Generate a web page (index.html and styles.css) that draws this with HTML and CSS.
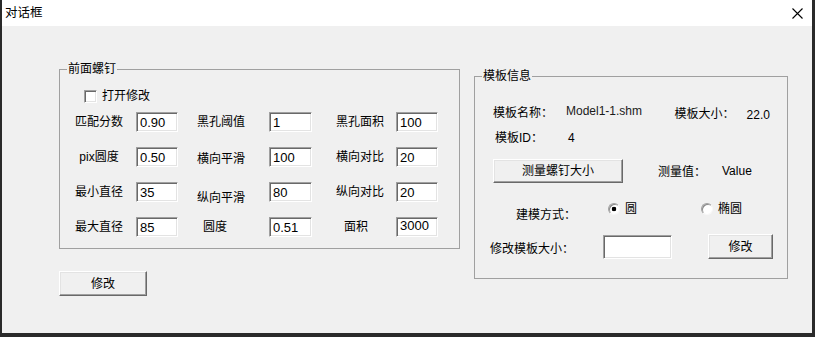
FILE: index.html
```html
<!DOCTYPE html>
<html lang="zh-CN">
<head>
<meta charset="utf-8">
<title>对话框</title>
<link rel="stylesheet" href="styles.css">
</head>
<body>
<div class="window">
  <div class="titlebar">
    <span class="title">对话框</span>
    <svg class="close" width="11" height="11" viewBox="0 0 11 11"><path d="M0.5 0.5 L10.5 10.5 M10.5 0.5 L0.5 10.5" stroke="#000" stroke-width="1.1" fill="none"/></svg>
  </div>
  <div class="client">
    <div class="left-col">
      <div class="groupbox gb-left">
        <span class="gb-title">前面螺钉</span>
        <div class="check-row"><span class="checkbox"></span><span>打开修改</span></div>
        <div class="param-grid">
          <span class="lbl1">匹配分数</span><input class="edit" value="0.90" readonly>
          <span class="lbl2">黑孔阈值</span><input class="edit" value="1" readonly>
          <span class="lbl3">黑孔面积</span><input class="edit" value="100" readonly>

          <span class="lbl1">pix圆度</span><input class="edit" value="0.50" readonly>
          <span class="lbl2 drop-s">横向平滑</span><input class="edit" value="100" readonly>
          <span class="lbl3">横向对比</span><input class="edit" value="20" readonly>

          <span class="lbl1">最小直径</span><input class="edit" value="35" readonly>
          <span class="lbl2 drop">纵向平滑</span><input class="edit" value="80" readonly>
          <span class="lbl3">纵向对比</span><input class="edit" value="20" readonly>

          <span class="lbl1">最大直径</span><input class="edit" value="85" readonly>
          <span class="lbl2 ind">圆度</span><input class="edit" value="0.51" readonly>
          <span class="lbl3 ind">面积</span><input class="edit up" value="3000" readonly>
        </div>
      </div>
      <button class="btn btn-left">修改</button>
    </div>

    <div class="groupbox gb-right">
      <span class="gb-title">模板信息</span>
      <div class="row r1">
        <span class="w-name">模板名称：</span>
        <span class="w-model">Model1-1.shm</span>
        <span class="w-size">模板大小：</span>
        <span class="w-cover">22.0</span>
      </div>
      <div class="row r2">
        <span class="w-id">模板ID：</span>
        <span>4</span>
      </div>
      <div class="row r3">
        <button class="btn btn-measure">测量螺钉大小</button>
        <span class="w-mlabel">测量值：</span>
        <span>Value</span>
      </div>
      <div class="row r4">
        <span class="w-mode">建模方式：</span>
        <span class="radio checked"></span><span class="radio-text">圆</span>
        <span class="radio radio2"></span><span class="radio-text">椭圆</span>
      </div>
      <div class="row r5">
        <span class="w-modify">修改模板大小：</span>
        <input class="edit edit-size" value="" readonly>
        <button class="btn btn-modify">修改</button>
      </div>
    </div>
  </div>
</div>
</body>
</html>
```

FILE: styles.css
```css
html, body {
  margin: 0;
  padding: 0;
  background: #2a2a2a;
  width: 815px;
  height: 337px;
  overflow: hidden;
}

body {
  font-family: "Liberation Sans", "Noto Sans CJK SC", sans-serif;
  font-size: 12px;
  color: #000;
}

.window {
  margin-left: 2px;
  width: 810px;
  height: 333px;
  background: #f0f0f0;
  display: flex;
  flex-direction: column;
}

.titlebar {
  height: 26px;
  background: #fff;
  display: flex;
  align-items: center;
  justify-content: space-between;
  padding: 0 9px 0 3px;
  box-sizing: border-box;
}

.title {
  font-size: 12.5px;
  line-height: 14px;
}

.close {
  display: block;
}

.client {
  display: flex;
  align-items: flex-start;
  padding: 43px 0 0 57px;
}

.left-col {
  display: flex;
  flex-direction: column;
  align-items: flex-start;
}

.groupbox {
  position: relative;
  border: 1px solid #a0a0a0;
  box-sizing: border-box;
}

.gb-title {
  position: absolute;
  top: -8px;
  left: 7px;
  padding: 0 1px;
  line-height: 14px;
  background: #f0f0f0;
}

.gb-left {
  width: 401px;
  height: 180px;
}

.check-row {
  display: flex;
  align-items: center;
  height: 14px;
  margin: 19px 0 0 24px;
  line-height: 14px;
}

.checkbox {
  width: 13px;
  height: 13px;
  box-sizing: border-box;
  background: #fff;
  border: 1px solid;
  border-color: #a0a0a0 #fff #fff #a0a0a0;
  box-shadow: inset 1px 1px 0 #696969, inset -1px -1px 0 #e3e3e3;
  margin-right: 5px;
}

.param-grid {
  display: grid;
  grid-template-columns: 66px 42px 91px 43px 84px 42px;
  grid-auto-rows: 20px;
  row-gap: 15px;
  align-items: center;
  margin: 9px 0 0 10px;
}

.param-grid span {
  line-height: 16px;
  white-space: nowrap;
}

.lbl1 {
  text-align: center;
  padding-right: 8px;
}

.lbl2 {
  padding-left: 19px;
}

.lbl3 {
  padding-left: 24px;
}

.lbl2.ind {
  padding-left: 25px;
}

.lbl3.ind {
  padding-left: 32px;
}

.drop {
  padding-top: 12px;
}

.drop-s {
  padding-top: 4px;
}

.edit {
  box-sizing: border-box;
  width: 100%;
  height: 20px;
  margin: 0;
  padding: 0 3px;
  background: #fff;
  border: 1px solid;
  border-color: #a0a0a0 #fff #fff #a0a0a0;
  box-shadow: inset 1px 1px 0 #696969, inset -1px -1px 0 #e3e3e3;
  font-family: "Liberation Sans", sans-serif;
  font-size: 13px;
  color: #000;
  outline: none;
}

.edit.up {
  padding-bottom: 3px;
}

.btn {
  box-sizing: border-box;
  margin: 0;
  padding: 0;
  background: #f0f0f0;
  border: 1px solid;
  border-color: #fff #696969 #696969 #fff;
  box-shadow: inset -1px -1px 0 #a0a0a0, inset 1px 1px 0 #e3e3e3;
  font-family: "Liberation Sans", "Noto Sans CJK SC", sans-serif;
  font-size: 12px;
  color: #000;
  line-height: 14px;
}

.btn-left {
  width: 88px;
  height: 25px;
  margin-top: 22px;
}

.gb-right {
  width: 314px;
  height: 203px;
  margin: 7px 0 0 14px;
  padding-left: 18px;
}

.row {
  display: flex;
  align-items: center;
  white-space: nowrap;
  line-height: 16px;
}

.r1 {
  height: 18px;
  margin-top: 25px;
}

.w-name {
  width: 74px;
  padding-top: 3px;
}

.w-model {
  width: 110px;
  color: #1a1a1a;
}

.w-size {
  width: 73px;
  padding-top: 5px;
}

.w-cover {
  width: 41px;
  height: 18px;
  line-height: 18px;
  padding-top: 4px;
  box-sizing: border-box;
  background: #f0f0f0;
}

.r2 {
  height: 18px;
  margin-top: 9px;
}

.w-id {
  width: 73px;
  margin-left: 2px;
}

.r3 {
  margin-top: 12px;
}

.btn-measure {
  width: 130px;
  height: 24px;
}

.w-mlabel {
  width: 64px;
  margin-left: 35px;
  padding-top: 2px;
}

.r4 {
  height: 24px;
  margin-top: 17px;
  align-items: flex-start;
}

.w-mode {
  width: 92px;
  margin-left: 23px;
  padding-top: 7px;
}

.radio {
  width: 12px;
  height: 12px;
  margin-top: 3px;
  box-sizing: border-box;
  border-radius: 50%;
  background: #fff;
  border: 1px solid;
  border-color: #a0a0a0 #f8f8f8 #f8f8f8 #a0a0a0;
  box-shadow: inset 1px 1px 0 #8a8a8a;
}

.radio.checked {
  background: radial-gradient(circle at 50% 50%, #000 0 2px, #fff 2.6px);
}

.radio2 {
  margin-left: 64px;
}

.radio-text {
  margin-left: 5px;
  line-height: 16px;
  padding-top: 1px;
}

.r5 {
  margin-top: 10px;
}

.w-modify {
  width: 113px;
  margin-left: -3px;
  padding-top: 5px;
}

.edit-size {
  width: 69px;
  height: 24px;
}

.btn-modify {
  width: 65px;
  height: 25px;
  margin-left: 36px;
}
```
